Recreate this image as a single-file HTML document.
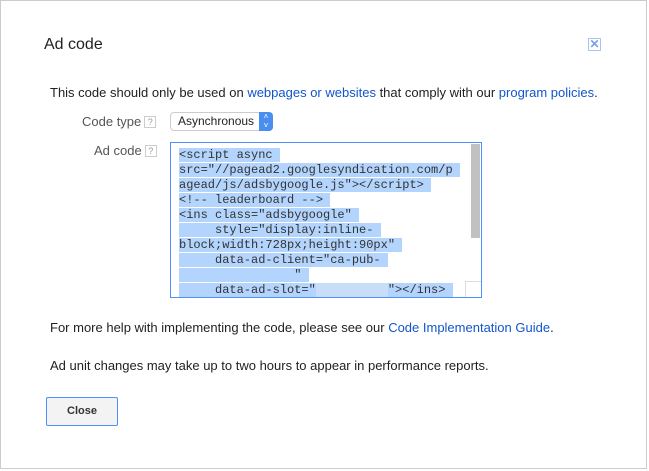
<!DOCTYPE html>
<html><head><style>
body{margin:0;width:649px;height:471px;background:#fff;font-family:"Liberation Sans",Arial,sans-serif;position:relative;overflow:hidden}
.dlg{position:absolute;left:0;top:0;width:645px;height:467px;border:1px solid #ccc;border-top:1px solid #ccc;background:#fff}
.a{position:absolute;white-space:nowrap}
a{color:#15c;text-decoration:none}
.q{display:inline-block;width:10px;height:10px;border:1px solid #ccc;font-size:9px;line-height:10px;text-align:center;color:#999;vertical-align:1px;margin-left:3px}
.code{position:absolute;left:170px;top:142px;width:310px;height:154px;border:1px solid #4d90fe;overflow:hidden;font-family:"Liberation Mono",monospace;font-size:12px;line-height:15px;color:#333}
.code span{background:#b3d4fd}
</style></head><body>
<div style="position:absolute;left:43px;top:0;width:36px;height:2px;background:#dde6f5"></div>
<div class="dlg"></div>
<div class="a" style="left:44px;top:36px;font-size:16px;color:#222">Ad code</div>
<div class="a" style="left:588px;top:38px;width:11px;height:11px;border:1px solid #aac4f5;color:#7a9fe8;font-size:12px;line-height:11px;text-align:center;font-weight:bold">✕</div>
<div class="a" style="left:50px;top:85px;font-size:13px;color:#222">This code should only be used on <a>webpages or websites</a> that comply with our <a>program policies</a>.</div>
<div class="a" style="left:82px;top:114px;font-size:13px;color:#555">Code type<span class="q">?</span></div>
<div class="a" style="left:170px;top:112px;width:101px;height:17px;border:1px solid #ccc;border-radius:4px;font-size:12px;line-height:17px;color:#222;background:#fff"><span style="margin-left:7px">Asynchronous</span><span style="position:absolute;right:-1px;top:-1px;width:14px;height:19px;background:#4a8ff0;border-radius:0 4px 4px 0;color:#fff;font-size:8px;line-height:9px;text-align:center">˄<br>˅</span></div>
<div class="a" style="left:94px;top:143px;font-size:13px;color:#555">Ad code<span class="q">?</span></div>
<div class="code">
<div style="position:absolute;right:1px;top:1px;width:9px;height:94px;background:#c1c1c1"></div>
<div style="position:absolute;right:0;bottom:0;width:15px;height:15px;border-left:1px solid #ddd;border-top:1px solid #ddd;background:#fff"></div>
<div style="position:absolute;left:8px;top:5px;white-space:pre"><span>&lt;script async </span>
<span>src="//pagead2.googlesyndication.com/p </span>
<span>agead/js/adsbygoogle.js"&gt;&lt;/script&gt; </span>
<span>&lt;!-- leaderboard --&gt; </span>
<span>&lt;ins class="adsbygoogle" </span>
<span>     style="display:inline- </span>
<span>block;width:728px;height:90px" </span>
<span>     data-ad-client="ca-pub- </span>
<span style="color:#b3d4fd">xxxxxxxxxxxxxxxx</span><span>" </span>
<span>     data-ad-slot="<span style="color:#c8ddf8;background:#c8ddf8">xxxxxxxxxx</span>"&gt;&lt;/ins&gt; </span></div>
</div>
<div class="a" style="left:50px;top:320px;font-size:13px;color:#222">For more help with implementing the code, please see our <a>Code Implementation Guide</a>.</div>
<div class="a" style="left:50px;top:358px;font-size:13px;color:#222">Ad unit changes may take up to two hours to appear in performance reports.</div>
<div class="a" style="left:46px;top:397px;width:70px;height:27px;border:1px solid #4d90fe;border-radius:2px;background:#f3f3f3;font-size:11px;font-weight:bold;color:#333;text-align:center;line-height:27px">Close</div>
</body></html>
